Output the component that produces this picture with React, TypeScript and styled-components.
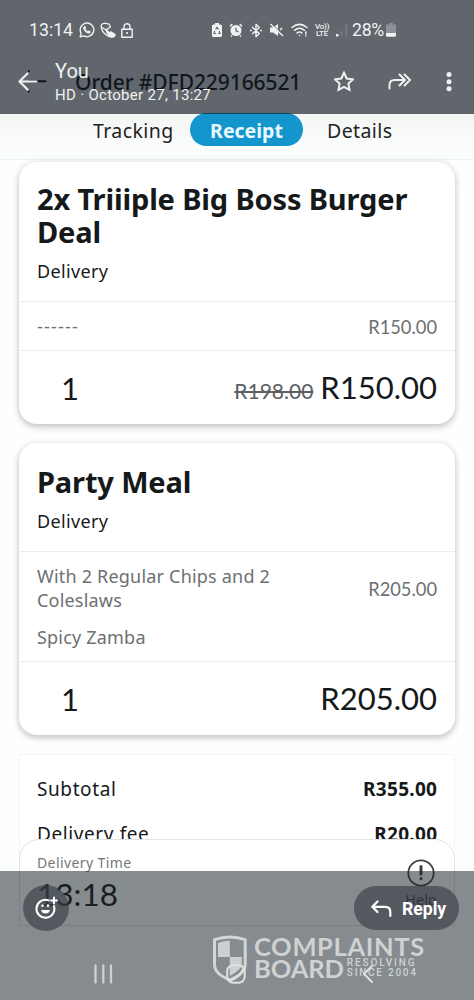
import React from "react";
import styled, { createGlobalStyle } from "styled-components";

const Global = createGlobalStyle`
  *, *::before, *::after { box-sizing: border-box; }
  body { margin: 0; background: #fff; }
`;

const body = `"Noto Sans", sans-serif`;
const numeric = `Lato, "Noto Sans", sans-serif`;
const system = `Roboto, "Noto Sans", sans-serif`;

const Screen = styled.main`
  position: relative;
  width: 474px;
  height: 1000px;
  overflow: hidden;
  background: #fdfefe;
  color: #16191a;
  font-family: ${body};
`;

const OrderHeader = styled.header`
  height: 113px;
  padding: 68px 0 0 28px;
  display: flex;
  align-items: flex-start;
  background: #fbfcfc;
`;

const OrderTitle = styled.h1`
  margin: 0 0 0 28px;
  font-size: 21px;
  font-weight: 500;
  line-height: 29px;
  letter-spacing: -0.08px;
  white-space: nowrap;
`;

const Tabs = styled.nav`
  height: 47px;
  padding-left: 93px;
  display: flex;
  align-items: flex-start;
  background: linear-gradient(#f3f5f5, #fbfcfc 70%);
  border-bottom: 1px solid #eff2f2;
`;

const Tab = styled.span<{ $active?: boolean; $w: number }>`
  width: ${(p) => p.$w}px;
  height: 33px;
  line-height: 35px;
  font-size: 19.5px;
  letter-spacing: ${(p) => (p.$active ? 0 : 0.4)}px;
  white-space: nowrap;
  font-weight: ${(p) => (p.$active ? 700 : 400)};
  color: ${(p) => (p.$active ? "#e9f8ff" : "#1f2324")};
  background: ${(p) => (p.$active ? "#1495cb" : "transparent")};
  border-radius: 17px;
  text-align: ${(p) => (p.$active ? "center" : "left")};
  margin-right: ${(p) => (p.$active ? 24 : 16)}px;
`;

const List = styled.section`
  padding: 2px 19px 0;
  display: flex;
  flex-direction: column;
  gap: 19px;
`;

const Card = styled.article<{ $h: number }>`
  height: ${(p) => p.$h}px;
  display: flex;
  flex-direction: column;
  border-radius: 18px;
  background: #fff;
  box-shadow: 0 3px 6px rgba(50, 55, 60, 0.25), 0 0 6px rgba(50, 55, 60, 0.1);
`;

const CardHead = styled.div<{ $h: number; $top: number }>`
  height: ${(p) => p.$h}px;
  padding: ${(p) => p.$top}px 18px 0;
`;

const Title = styled.h2`
  margin: 0;
  font-size: 29px;
  line-height: 33px;
  font-weight: 700;
  letter-spacing: -0.15px;
  white-space: nowrap;
`;

const Method = styled.div`
  margin-top: 9px;
  font-size: 18px;
  line-height: 28px;
  letter-spacing: 0.35px;
`;

const Row = styled.div<{ $h: number }>`
  height: ${(p) => p.$h}px;
  padding: 0 18px;
  border-top: 1px solid #e9eded;
  display: flex;
  align-items: center;
  justify-content: space-between;
`;

const Options = styled.div`
  color: #6c7072;
  font-size: 18px;
  line-height: 24px;
  letter-spacing: 0.2px;
  white-space: nowrap;
`;

const Option = styled.div`
  & + & { margin-top: 13px; }
`;

const Dashes = styled.span`
  letter-spacing: 1.2px;
`;

const UnitPrice = styled.span<{ $lift?: number }>`
  font-family: ${numeric};
  color: #6c7072;
  font-size: 18.3px;
  margin-top: ${(p) => (p.$lift ? 0 : 2)}px;
  margin-bottom: ${(p) => p.$lift ?? 0}px;
`;

const Quantity = styled.span`
  font-family: ${numeric};
  font-size: 31px;
  font-weight: 400;
  padding-left: 24px;
`;

const Amount = styled.span`
  font-family: ${numeric};
  font-size: 31px;
  margin-bottom: 1px;
  display: flex;
  align-items: baseline;
`;

const Was = styled.s`
  font-family: ${numeric};
  font-size: 21px;
  color: #5c6062;
  padding: 0 1px 0 3px;
  margin-right: 6px;
`;

const Totals = styled.section`
  margin: 19px 19px 0;
  height: 171px;
  padding: 11px 17px;
  background: #fff;
  border: 1px solid #f1f4f4;
`;

const TotalRow = styled.div`
  height: 45px;
  display: flex;
  align-items: center;
  justify-content: space-between;
  font-size: 19px;
  letter-spacing: 0.6px;
  b { font-weight: 700; letter-spacing: 0.3px; margin-right: -0.3px; }
`;

const DeliverySheet = styled.section`
  position: absolute;
  left: 19px;
  top: 839px;
  width: 436px;
  height: 87px;
  padding: 12px 17px 0;
  display: flex;
  justify-content: space-between;
  background: #fff;
  border: 1px solid #e2e5e5;
  border-radius: 20px 20px 0 0;
`;

const SheetLabel = styled.div`
  color: #74787a;
  font-size: 14px;
  line-height: 22px;
  letter-spacing: 0.4px;
`;

const SheetTime = styled.div`
  font-family: ${numeric};
  font-size: 31.5px;
  line-height: 41px;
`;

const Help = styled.div`
  padding-top: 7px;
  width: 32px;
  display: flex;
  flex-direction: column;
  align-items: center;
  font-size: 14.5px;
  line-height: 24px;
  svg { display: block; }
`;

const TopScrim = styled.div`
  position: absolute;
  inset: 0 0 auto 0;
  height: 113.5px;
  background: rgba(14, 21, 30, 0.65);
  color: #eff1f2;
  font-family: ${system};
`;

const StatusBar = styled.div`
  height: 59px;
  padding: 1px 0 0 29px;
  display: flex;
  align-items: center;
  font-size: 17.7px;
`;

const Clock = styled.span`
  width: 44px;
`;

const StatusIcons = styled.div<{ $left: number; $gap: number }>`
  display: flex;
  align-items: center;
  margin-left: ${(p) => p.$left}px;
  gap: ${(p) => p.$gap}px;
  svg { display: block; flex: none; }
`;

const Percent = styled.span`
  width: 33px;
  letter-spacing: -0.3px;
`;

const Volte = styled.span`
  width: 14px;
  font-size: 8px;
  font-weight: 500;
  line-height: 7.5px;
  text-align: center;
  letter-spacing: -0.2px;
`;

const MessageBar = styled.div`
  height: 53px;
  padding-left: 18px;
  display: flex;
  align-items: flex-start;
`;

const Sender = styled.div`
  width: 262px;
  margin-left: 16px;
  font-size: 20px;
  line-height: 25px;
  small { display: block; font-size: 15px; line-height: 22px; letter-spacing: 0.3px; white-space: nowrap; }
`;

const BarActions = styled.div`
  display: flex;
  align-items: center;
  padding-top: 10px;
  svg { display: block; }
`;

const BottomScrim = styled.div`
  position: absolute;
  inset: 871px 0 0 0;
  background: rgba(27, 36, 41, 0.53);
`;

const Bubble = styled.div`
  position: absolute;
  left: 23px;
  top: 14px;
  width: 46px;
  height: 46px;
  border-radius: 50%;
  display: grid;
  place-items: center;
  background: rgba(58, 63, 71, 0.66);
`;

const Reply = styled.div`
  position: absolute;
  left: 354px;
  top: 15px;
  width: 105px;
  height: 44px;
  border-radius: 22px;
  padding: 2px 0 0 17px;
  display: flex;
  align-items: center;
  gap: 10px;
  background: rgba(58, 63, 71, 0.66);
  color: #fff;
  font-family: ${system};
  font-size: 17.6px;
  font-weight: 700;
`;

const NavKey = styled.svg<{ $x: number; $y: number }>`
  position: absolute;
  left: ${(p) => p.$x}px;
  top: ${(p) => p.$y}px;
`;

const Watermark = styled.div`
  position: absolute;
  left: 212px;
  top: 64px;
  display: flex;
  gap: 6px;
  color: #cfd2d3;
  font-family: Lato, sans-serif;
`;

const Brand = styled.div`
  font-size: 25.5px;
  font-weight: 700;
  line-height: 22px;
  white-space: nowrap;
  letter-spacing: 0.65px;
`;

const BrandRow = styled.div`
  display: flex;
  align-items: center;
  letter-spacing: -0.1px;
`;

const Tagline = styled.div`
  margin-left: 3px;
  font-family: Roboto, sans-serif;
  font-size: 10px;
  font-weight: 500;
  line-height: 10.5px;
  letter-spacing: 1.9px;
  div + div { letter-spacing: 1.75px; }
`;

const stroke = { fill: "none", stroke: "currentColor", strokeLinecap: "round" as const, strokeLinejoin: "round" as const };

const WhatsApp = () => (
  <svg width="16" height="16" viewBox="0 0 16 16" {...stroke} strokeWidth="1.4">
    <path d="M1.2 14.8 2.2 11.3A6.8 6.8 0 1 1 4.8 13.8Z" />
    <path d="M5.1 4.6c.5-.6 1-.4 1.2.1l.5 1.2-.6 1c.5 1.3 1.5 2.1 2.7 2.6l.9-.7 1.5.8c.2 1.3-1 1.8-2 1.6C6.8 10.6 4.6 8.3 4.5 6.2Z" fill="currentColor" strokeWidth=".7" />
  </svg>
);

const CallMuted = () => (
  <svg width="16" height="16" viewBox="0 0 16 16" {...stroke} strokeWidth="1.3">
    <path d="M4.8 1.200C2 1.200.6 3.500 1.300 6M2 5.500 6 8 10.500 5 9 2.200 4.800 1.200" />
    <path d="M1.500 6.500c1 4 5 8 10 8.500" />
    <path d="M6 7.500 9.500 11 11 9.800 15 12.500c0 1.500-1 2.500-2.500 2.500C9.500 14.500 7 11.500 6 7.500Z" fill="currentColor" />
  </svg>
);

const Lock = () => (
  <svg width="12" height="15" viewBox="0 0 12 15" {...stroke} strokeWidth="1.4">
    <path d="M3 6V3.700a3 3 0 0 1 6 0V6M.8 6.200h10.400v8H.8Z" />
    <circle cx="6" cy="10" r="1.100" fill="currentColor" stroke="none" />
  </svg>
);

const BatterySaver = () => (
  <svg width="10" height="14" viewBox="0 0 10 14">
    <path fill="currentColor" d="M3 0h4v1.500h1.500Q10 1.500 10 3v9.500Q10 14 8.500 14h-7Q0 14 0 12.500V3q0-1.500 1.500-1.500H3Z" />
    <path d="M3.500 6.500 5 4.300 6.500 6.500M7.300 8 8 10.500H6M4 10.500H2L2.700 8" fill="none" stroke="#666b71" strokeWidth="1.100" />
  </svg>
);

const Alarm = () => (
  <svg width="14" height="14" viewBox="0 0 14 14">
    <circle cx="7" cy="7.500" r="5.500" fill="currentColor" />
    <path d="M1 3.500 3.300 1M13 3.500 10.700 1M3 12.500l-1 1M11 12.500l1 1" stroke="currentColor" strokeWidth="1.500" />
    <path d="M7 4.500v3.300l2.500 1" stroke="#666b71" strokeWidth="1.300" fill="none" />
  </svg>
);

const Bluetooth = () => (
  <svg width="12" height="15" viewBox="0 0 12 15" {...stroke} strokeWidth="1.400">
    <path d="M2.500 4.200 9.300 10.500 6 13.700V1.300l3.300 3.200L2.500 10.800" />
    <path d="M.8 7.500h.1M11 7.500h.1" strokeWidth="1.800" />
  </svg>
);

const Muted = () => (
  <svg width="15" height="14" viewBox="0 0 15 14">
    <path d="M1 4.500h3L9 1v12L4 9.500H1Z" fill="currentColor" />
    <path d="M1.500 1 14 13M11 7l2-2" stroke="currentColor" strokeWidth="1.500" />
    <path d="M2.800.8 14 11" stroke="#666b71" strokeWidth=".8" />
  </svg>
);

const Wifi = () => (
  <svg width="17" height="14" viewBox="0 0 17 14" {...stroke} strokeWidth="1.500">
    <path d="M1 4.500Q8.500-1.700 16 4.500M3.500 7.300q5-4 10 0M6 10q2.500-2 5 0" />
    <path d="M8.500 12.500h.1M14.800 9v2M14.800 13h.1" />
  </svg>
);

const Signal = () => (
  <svg width="12" height="14" viewBox="0 0 12 14" fill="currentColor">
    <path d="M0 11h2.500v2.500H0Z" />
    <path d="M4.500 8H7v5.500H4.500ZM9 1h2.500v12.500H9Z" opacity=".12" />
  </svg>
);

const Battery = () => (
  <svg width="10" height="14" viewBox="0 0 10 14" fill="currentColor">
    <path opacity=".3" d="M3 0h4v1.500h3V10H0V1.500h3Z" />
    <path d="M0 10h10v2.500q0 1.200-1.200 1.200H1.200Q0 13.700 0 12.500Z" />
  </svg>
);

const Shield = () => (
  <svg width="36" height="49" viewBox="0 0 36 49">
    <path d="M2.500 4.700Q18-.8 33.200 4.700V29c0 8-6.500 12-15.500 16C8.700 41 2.500 37 2.500 29Z" fill="none" stroke="#d3d6d7" strokeWidth="3" />
    <path d="M6 8q6-2.200 11.800-2.200V22H6ZM17.800 22h12v7.500q0 5-12 11.500Z" fill="#cdd0d1" />
  </svg>
);

export default function App() {
  return (
    <>
      <Global />
      <Screen>
        <OrderHeader>
          <svg width="19" height="26" viewBox="0 0 19 26" {...stroke} strokeWidth="2">
            <path d="M2 13.300h15.500M.8 3v.2M.8 23.500v.2" />
          </svg>
          <OrderTitle>Order #DFD229166521</OrderTitle>
        </OrderHeader>

        <Tabs>
          <Tab $w={81}>Tracking</Tab>
          <Tab $active $w={113}>Receipt</Tab>
          <Tab $w={70}>Details</Tab>
        </Tabs>

        <List>
          <Card $h={262}>
            <CardHead $h={139} $top={20}>
              <Title>2x Triiiple Big Boss Burger<br />Deal</Title>
              <Method>Delivery</Method>
            </CardHead>
            <Row $h={49}>
              <Options><Dashes>------</Dashes></Options>
              <UnitPrice>R150.00</UnitPrice>
            </Row>
            <Row $h={74}>
              <Quantity>1</Quantity>
              <Amount><Was>R198.00</Was>R150.00</Amount>
            </Row>
          </Card>

          <Card $h={292}>
            <CardHead $h={108} $top={22}>
              <Title>Party Meal</Title>
              <Method>Delivery</Method>
            </CardHead>
            <Row $h={110}>
              <Options>
                <Option>With 2 Regular Chips and 2<br />Coleslaws</Option>
                <Option>Spicy Zamba</Option>
              </Options>
              <UnitPrice $lift={36}>R205.00</UnitPrice>
            </Row>
            <Row $h={74}>
              <Quantity>1</Quantity>
              <Amount>R205.00</Amount>
            </Row>
          </Card>
        </List>

        <Totals>
          <TotalRow>Subtotal<b>R355.00</b></TotalRow>
          <TotalRow>Delivery fee<b>R20.00</b></TotalRow>
        </Totals>

        <DeliverySheet>
          <div>
            <SheetLabel>Delivery Time</SheetLabel>
            <SheetTime>13:18</SheetTime>
          </div>
          <Help>
            <svg width="28" height="28" viewBox="0 0 28 28" {...stroke} stroke="#3d4245" strokeWidth="1.800">
              <circle cx="14" cy="14" r="12.700" />
              <path d="M14 7.500v7.500M14 19.500v.2" strokeWidth="3" />
            </svg>
            Help
          </Help>
        </DeliverySheet>

        <TopScrim>
          <StatusBar>
            <Clock>13:14</Clock>
            <StatusIcons $left={6} $gap={5}><WhatsApp /><CallMuted /><Lock /></StatusIcons>
            <StatusIcons $left={79} $gap={7}>
              <BatterySaver /><Alarm /><Bluetooth /><Muted /><Wifi />
              <Volte>Vo))<br />LTE</Volte>
              <Signal />
            </StatusIcons>
            <StatusIcons $left={4} $gap={1}><Percent>28%</Percent><Battery /></StatusIcons>
          </StatusBar>
          <MessageBar>
            <svg width="21" height="44" viewBox="0 0 21 44" {...stroke} strokeWidth="2.200">
              <path d="M18.500 22.500h-16M9.500 14.500l-8 8 8 8" />
            </svg>
            <Sender>You<small>HD · October 27, 13:27</small></Sender>
            <BarActions>
              <svg width="20" height="26" viewBox="0 0 20 26" style={{ marginLeft: 17 }} {...stroke} strokeWidth="2">
                <path d="m10 3.800 2.700 5.700 6.200.8-4.500 4.300 1.100 6.200-5.500-3-5.500 3 1.100-6.200L1.100 10.300l6.200-.8Z" strokeLinejoin="miter" />
              </svg>
              <svg width="24" height="26" viewBox="0 0 24 26" style={{ marginLeft: 34 }} {...stroke} strokeWidth="2">
                <path d="M1.500 19.500V16q0-5 5-5h10M11.500 5.500l5.500 5.500-5.500 5.500M16.500 5.500l5.500 5.500-5.500 5.500" />
              </svg>
              <svg width="6" height="26" viewBox="0 0 6 26" style={{ marginLeft: 34 }} fill="currentColor">
                <circle cx="3" cy="5.500" r="2.500" /><circle cx="3" cy="12.700" r="2.500" /><circle cx="3" cy="19.800" r="2.500" />
              </svg>
            </BarActions>
          </MessageBar>
        </TopScrim>

        <BottomScrim>
          <Bubble>
            <svg width="24" height="24" viewBox="0 0 24 24" {...stroke} stroke="#fff" strokeWidth="2">
              <path d="M14.500 4.300A9 9 0 1 0 20 10M20 1.500v6M17 4.500h6" />
              <path d="M8.500 9.500v.2M14 9.500v.2" strokeWidth="2.600" />
              <path d="M7 14h9q-1 3.500-4.500 3.500T7 14Z" fill="#fff" stroke="none" />
            </svg>
          </Bubble>
          <Reply>
            <svg width="21" height="18" viewBox="0 0 21 18" {...stroke} strokeWidth="2.200">
              <path d="M6.500 1.500 1.300 6.800l5.200 5.200M1.300 6.800h13q5 0 5 5V16" />
            </svg>
            Reply
          </Reply>
          <Watermark>
            <Shield />
            <Brand>
              COMPLAINTS
              <BrandRow>BOARD<Tagline><div>RESOLVING</div><div>SINCE 2004</div></Tagline></BrandRow>
            </Brand>
          </Watermark>
          <NavKey $x={93} $y={93} width="20" height="20" viewBox="0 0 20 20" {...stroke} stroke="#ced1d2" strokeWidth="2.300">
            <path d="M2.500 1.500v17M10.300 1.500v17M18 1.500v17" />
          </NavKey>
          <NavKey $x={226} $y={93} width="20" height="20" viewBox="0 0 20 20" {...stroke} stroke="#dfe1e2" strokeWidth="2">
            <rect x="1.200" y="1.200" width="17.500" height="17.500" rx="6" />
            <path d="M3 17Q14 14 17 5" />
          </NavKey>
          <NavKey $x={361} $y={93} width="14" height="20" viewBox="0 0 14 20" {...stroke} stroke="#dfe1e2" strokeWidth="2">
            <path d="M11 2 3 10l8 8" />
          </NavKey>
        </BottomScrim>
      </Screen>
    </>
  );
}
